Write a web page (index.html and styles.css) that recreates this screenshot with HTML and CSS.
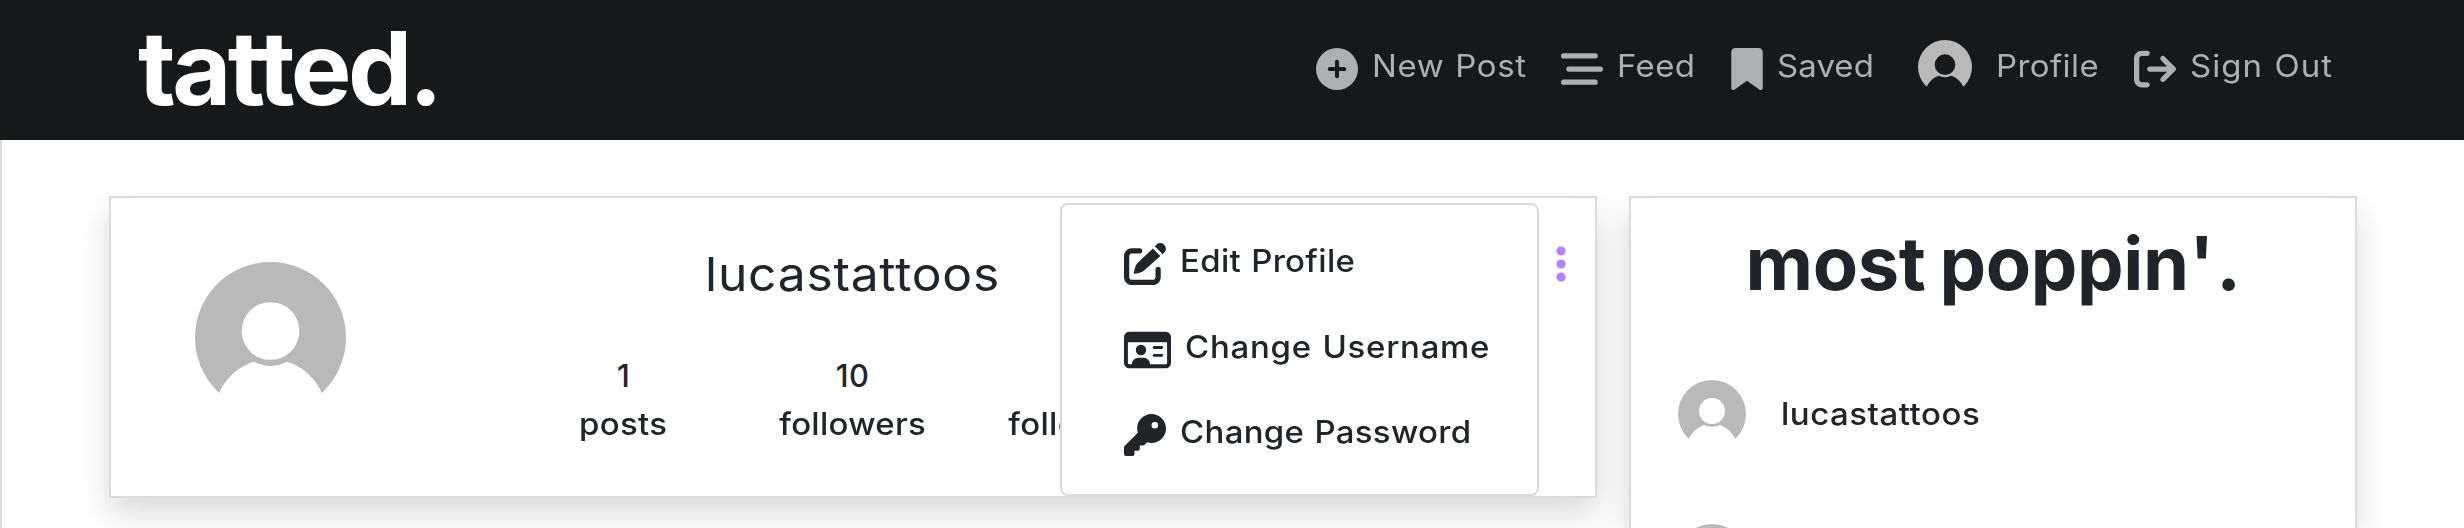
FILE: index.html
```html
<!DOCTYPE html>
<html lang="en">
<head>
<meta charset="utf-8">
<title>tatted.</title>
<link rel="stylesheet" href="styles.css">
</head>
<body>
<svg class="defs" width="0" height="0" aria-hidden="true">
  <mask id="person">
    <circle cx="226.5" cy="226.5" r="226.5" fill="#fff"/>
    <circle cx="226.5" cy="460" r="168" fill="#000"/>
    <circle cx="226.5" cy="207" r="105" fill="#fff"/>
    <circle cx="226.5" cy="207" r="86.5" fill="#000"/>
  </mask>
  <symbol id="avatar" viewBox="0 0 453 453"><rect width="453" height="453" fill="#b9b9b9" mask="url(#person)"/></symbol>
</svg>
<header class="navbar">
  <a class="brand">tatted.</a>
  <nav class="nav">
    <a class="nav-link new-post"><svg class="icon" viewBox="0 0 512 512"><path d="M256 512A256 256 0 1 0 256 0a256 256 0 1 0 0 512zM232 344V280H168c-13.3 0-24-10.7-24-24s10.7-24 24-24h64V168c0-13.3 10.7-24 24-24s24 10.7 24 24v64h64c13.3 0 24 10.7 24 24s-10.7 24-24 24H280v64c0 13.3-10.7 24-24 24s-24-10.7-24-24z"/></svg><span>New Post</span></a>
    <a class="nav-link feed"><svg class="icon" viewBox="0 0 512 512"><rect y="64" width="448" height="64" rx="32"/><rect x="64" y="224" width="448" height="64" rx="32"/><rect y="384" width="448" height="64" rx="32"/></svg><span>Feed</span></a>
    <a class="nav-link saved"><svg class="icon bookmark" viewBox="0 0 384 512"><path d="M0 48V487.7C0 501.1 10.9 512 24.3 512c5 0 9.9-1.5 14-4.4L192 400 345.7 507.6c4.1 2.9 9 4.4 14 4.4c13.4 0 24.3-10.9 24.3-24.3V48c0-26.5-21.5-48-48-48H48C21.5 0 0 21.5 0 48z"/></svg><span>Saved</span></a>
    <a class="nav-link profile"><svg class="avatar-nav"><use href="#avatar"/></svg><span>Profile</span></a>
    <a class="nav-link sign-out"><svg class="icon" viewBox="0 0 512 512"><path d="M502.6 278.6c12.5-12.5 12.5-32.8 0-45.3l-128-128c-12.5-12.5-32.8-12.5-45.3 0s-12.5 32.8 0 45.3L402.7 224 192 224c-17.7 0-32 14.3-32 32s14.3 32 32 32l210.7 0-73.4 73.4c-12.5 12.5-12.5 32.8 0 45.3s32.8 12.5 45.3 0l128-128zM160 96c17.7 0 32-14.3 32-32s-14.3-32-32-32L96 32C43 32 0 75 0 128L0 384c0 53 43 96 96 96l64 0c17.7 0 32-14.3 32-32s-14.3-32-32-32l-64 0c-17.7 0-32-14.3-32-32l0-256c0-17.7 14.3-32 32-32l64 0z"/></svg><span>Sign Out</span></a>
  </nav>
</header>
<main class="page">
  <section class="card profile-card">
    <svg class="avatar-large"><use href="#avatar"/></svg>
    <div class="summary">
      <h3 class="username">lucastattoos</h3>
      <div class="stats">
        <div class="stat">1<br><span>posts</span></div>
        <div class="stat">10<br><span>followers</span></div>
        <div class="stat">12<br><span>following</span></div>
      </div>
    </div>
    <svg class="dots" viewBox="0 0 10 36"><circle cx="5" cy="5" r="4.6"/><circle cx="5" cy="18" r="4.6"/><circle cx="5" cy="31" r="4.6"/></svg>
    <div class="menu">
      <a class="menu-item edit"><svg class="icon" viewBox="0 0 512 512"><path d="M490 22c-26-26-66-29-92-3L376 41l95 95 22-22c26-26 23-66-3-92zM352 66L160 250C142 270 128 314 120 362C119 371 125 377 134 376C182 368 222 354 242 338L443 158z"/><path d="M96 64C43 64 0 107 0 160V416c0 53 43 96 96 96H352c53 0 96-43 96-96V320c0-17.7-14.3-32-32-32s-32 14.3-32 32v96c0 17.7-14.3 32-32 32H96c-17.7 0-32-14.3-32-32V160c0-17.7 14.3-32 32-32h96c17.7 0 32-14.3 32-32s-14.3-32-32-32H96z"/></svg><span>Edit Profile</span></a>
      <a class="menu-item rename"><svg class="icon id-card" viewBox="0 0 576 512"><path fill-rule="evenodd" d="M64 32H512a64 64 0 0 1 64 64V416a64 64 0 0 1-64 64H64a64 64 0 0 1-64-64V96a64 64 0 0 1 64-64zM48 160V416a16 16 0 0 0 16 16H96a80 80 0 0 1 80-80h64a80 80 0 0 1 80 80H512a16 16 0 0 0 16-16V160z"/><circle cx="208" cy="256" r="64"/><rect x="352" y="208" width="128" height="36" rx="18"/><rect x="352" y="304" width="128" height="36" rx="18"/></svg><span>Change Username</span></a>
      <a class="menu-item password"><svg class="icon" viewBox="0 0 512 512"><path d="M336 352c97.2 0 176-78.8 176-176S433.2 0 336 0S160 78.8 160 176c0 18.7 2.9 36.8 8.3 53.7L7 391c-4.5 4.5-7 10.6-7 17v80c0 13.3 10.7 24 24 24h80c13.3 0 24-10.7 24-24V448h40c13.3 0 24-10.7 24-24V384h40c6.4 0 12.5-2.5 17-7l33.3-33.3c16.9 5.4 35 8.3 53.7 8.3zM376 96a40 40 0 1 1 0 80 40 40 0 1 1 0-80z"/></svg><span>Change Password</span></a>
    </div>
  </section>
  <aside class="card popular">
    <h1 class="popular-title">most poppi<b>n'</b>.</h1>
    <a class="person"><svg class="avatar-small"><use href="#avatar"/></svg><span>lucastattoos</span></a>
    <a class="person"><svg class="avatar-small"><use href="#avatar"/></svg></a>
  </aside>
</main>
</body>
</html>
```
FILE: styles.css
```css
* { box-sizing: border-box; }
html, body { height: 100%; overflow: hidden; }
body {
  margin: 0;
  display: flex;
  flex-direction: column;
  background: #fff;
  color: #212529;
  font: 450 30.8px/48px Inter, "Open Sans", sans-serif;
  letter-spacing: .3px;
  word-spacing: 1px;
}
.defs { position: absolute; }
svg { display: block; flex: none; }
.icon { width: 42px; height: 42px; fill: currentColor; }
/* Labels are set slightly extended */
span {
  display: inline-block;
  white-space: nowrap;
  transform: scaleX(1.07);
  transform-origin: left;
}

.navbar {
  flex: none;
  height: 140px;
  padding-left: 138px;
  display: flex;
  background: #17181a;
  color: #adb0b3;
}
.brand {
  width: 1178px;
  font-size: 102px;
  line-height: 137px;
  font-weight: 700;
  letter-spacing: -3.6px;
  color: #fff;
}
.nav { display: flex; height: 136px; align-items: center; font-weight: 400; }
.nav-link { display: flex; align-items: center; letter-spacing: .6px; }
.nav-link span { margin: -4px 0 0 14px; }
.nav-link .icon { margin-top: 1px; }
.new-post { width: 245px; }
.feed { width: 170px; letter-spacing: .4px; }
.saved { width: 187px; letter-spacing: .1px; }
.profile { width: 216px; letter-spacing: .4px; }
.sign-out { letter-spacing: 1px; }
.bookmark { width: 32px; }
.avatar-nav { width: 54px; height: 54px; margin-top: -2px; }
.profile span { margin-left: 24px; }

.page {
  flex: 1;
  min-height: 0;
  overflow: hidden;
  display: flex;
  align-items: flex-start;
  gap: 32px;
  padding: 56px 107px 0;
  border-left: 2px solid #dcdbe0;
}
.card {
  border: 2px solid #dbdbdf;
  background: #fff;
  box-shadow: 0 16px 32px rgba(0, 0, 0, .15);
}
.profile-card {
  position: relative;
  width: 1488px;
  height: 302px;
  display: flex;
  padding: 0 29px 0 84px;
}
.avatar-large { width: 151px; height: 151px; margin-top: 64px; }
.summary { margin-left: 163px; width: 687px; text-align: center; }
.username {
  margin: 46px 0 0;
  font-size: 46.5px;
  line-height: 60px;
  font-weight: 430;
  letter-spacing: .7px;
  transform: scaleX(1.07);
}
.stats { display: flex; margin-top: 48px; }
.stat { width: 229px; }
.stat span { transform-origin: center; }
.dots { width: 10px; height: 36px; margin: 48px 0 0 auto; fill: #ad86f8; }
.menu {
  position: absolute;
  left: 949px;
  top: 5px;
  width: 479px;
  height: 293px;
  padding: 38px 0 0 62px;
  border: 2px solid #d9d9d9;
  border-radius: 8px;
  background: #fff;
}
.menu-item { display: flex; align-items: flex-start; height: 85.5px; }
.menu-item span { margin: -6px 0 0 14px; }
.rename { letter-spacing: .7px; }
.id-card { width: 47px; }

.popular { width: 728px; height: 332px; border-bottom: 0; overflow: hidden; }
.popular-title {
  margin: 20px 0 0;
  text-align: center;
  font-size: 74px;
  line-height: 90px;
  letter-spacing: -.4px;
  word-spacing: -3px;
  font-weight: 700;
}
.popular-title b { font-weight: inherit; letter-spacing: 1.8px; }
.person { display: flex; align-items: center; height: 68px; margin: 72px 0 76px 47px; }
.person + .person { margin-top: 0; }
.person span { margin-left: 35px; letter-spacing: .5px; }
.avatar-small { width: 68px; height: 68px; }
```
